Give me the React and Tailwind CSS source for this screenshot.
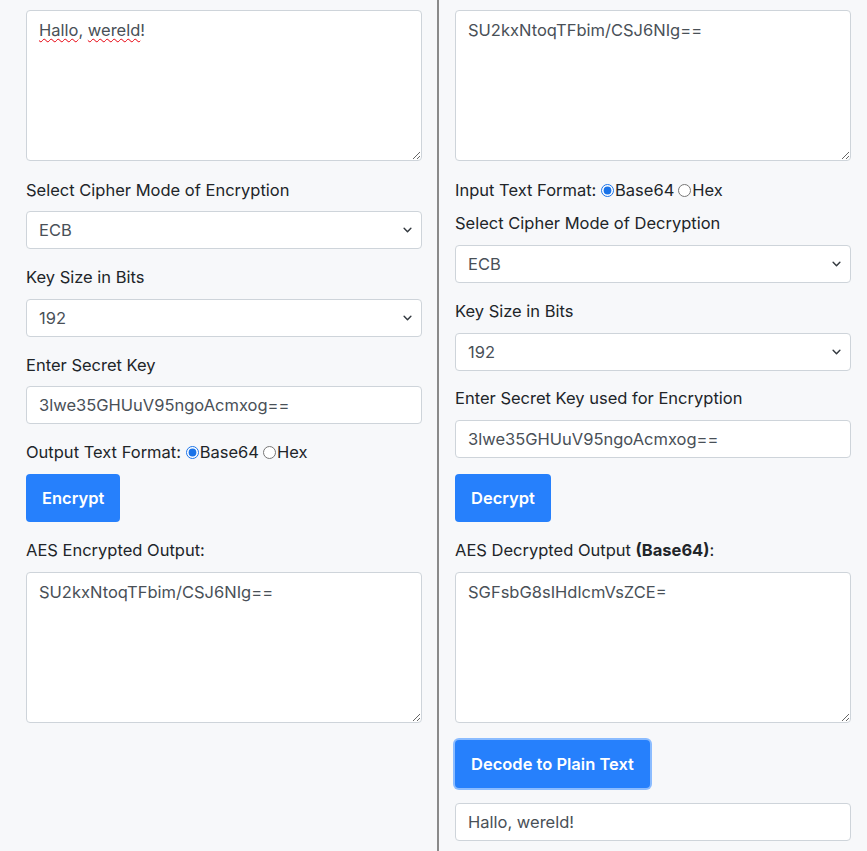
import React from "react";

function Chevron() {
  return (
    <svg className="pointer-events-none absolute right-[10px] top-1/2 -translate-y-1/2" width="9" height="9" viewBox="0 0 16 16">
      <path d="M2 5l6 6 6-6" fill="none" stroke="#343a40" strokeWidth="2.6" strokeLinecap="round" strokeLinejoin="round" />
    </svg>
  );
}

function Select({ value, className = "" }) {
  return (
    <div className={"relative " + className}>
      <select defaultValue={value} className="block h-[38px] w-full appearance-none rounded-[4px] border border-[#ced4da] bg-white pl-3 pr-8 text-[16.5px] text-[#495057] outline-none">
        <option>{value}</option>
      </select>
      <Chevron />
    </div>
  );
}

function Input({ value, className = "" }) {
  return (
    <input readOnly value={value} className={"block h-[38px] w-full rounded-[4px] border border-[#ced4da] bg-white px-3 text-[16.5px] text-[#495057] outline-none " + className} />
  );
}

function Area({ children, className = "" }) {
  return (
    <div className={"h-[151px] w-full resize-y overflow-auto rounded-[4px] border border-[#ced4da] bg-white px-3 py-[7px] text-[16.5px] leading-6 text-[#495057] " + className}>
      {children}
    </div>
  );
}

function Label({ children, className = "" }) {
  return <div className={"h-6 text-[16.5px] leading-6 text-[#212529] " + className}>{children}</div>;
}

function Radios({ label, name, className = "" }) {
  return (
    <div className={"flex h-6 items-center text-[16.5px] leading-6 text-[#212529] " + className}>
      <span>{label}&nbsp;</span>
      <input type="radio" name={name} defaultChecked className="m-0 mr-[1px] h-[13px] w-[13px] accent-[#1a73e8]" />
      <span>Base64</span>
      <input type="radio" name={name} className="m-0 ml-[4px] mr-[1px] h-[13px] w-[13px]" />
      <span>Hex</span>
    </div>
  );
}

function Btn({ children, className = "" }) {
  return (
    <button className={"block h-12 rounded-[4px] bg-[#2680fc] px-[16px] text-[16.5px] font-semibold text-white " + className}>
      {children}
    </button>
  );
}

export default function App() {
  return (
    <div className="flex min-h-[851px] w-[867px] bg-[#f7f8fa]" style={{ fontFamily: "Inter, 'Open Sans', sans-serif" }}>
      <div className="w-[437px] shrink-0 pl-[26px] pr-[15px] pt-[10px]">
        <Area>
          <span className="underline decoration-wavy decoration-red-600 decoration-1 underline-offset-2">Hallo</span>,{" "}
          <span className="underline decoration-wavy decoration-red-600 decoration-1 underline-offset-2">wereld</span>!
        </Area>
        <Label className="mt-[17px] mb-[9px]">Select Cipher Mode of Encryption</Label>
        <Select value="ECB" />
        <Label className="mt-4 mb-[10px]">Key Size in Bits</Label>
        <Select value="192" />
        <Label className="mt-4 mb-[9px]">Enter Secret Key</Label>
        <Input value="3lwe35GHUuV95ngoAcmxog==" />
        <Radios className="mt-4" label="Output Text Format:" name="out" />
        <Btn className="mt-[10px]">Encrypt</Btn>
        <Label className="mt-4 mb-[10px]">AES Encrypted Output:</Label>
        <Area>SU2kxNtoqTFbim/CSJ6NIg==</Area>
      </div>
      <div className="w-[2px] shrink-0 bg-[#8a8a8a]" />
      <div className="w-[428px] shrink-0 pl-[16px] pr-[16px] pt-[10px]">
        <Area>SU2kxNtoqTFbim/CSJ6NIg==</Area>
        <Radios className="mt-[17px]" label="Input Text Format:" name="in" />
        <Label className="mt-[9px] mb-[10px]">Select Cipher Mode of Decryption</Label>
        <Select value="ECB" />
        <Label className="mt-4 mb-[10px]">Key Size in Bits</Label>
        <Select value="192" />
        <Label className="mt-[15px] mb-[10px]">Enter Secret Key used for Encryption</Label>
        <Input value="3lwe35GHUuV95ngoAcmxog==" />
        <Btn className="mt-4">Decrypt</Btn>
        <Label className="mt-4 mb-[10px]">
          AES Decrypted Output <b className="font-bold">(Base64)</b>:
        </Label>
        <Area>SGFsbG8sIHdlcmVsZCE=</Area>
        <Btn className="mt-[17px] ring-2 ring-[#8bbcff]">Decode to Plain Text</Btn>
        <Input className="mt-[15px]" value="Hallo, wereld!" />
      </div>
    </div>
  );
}
